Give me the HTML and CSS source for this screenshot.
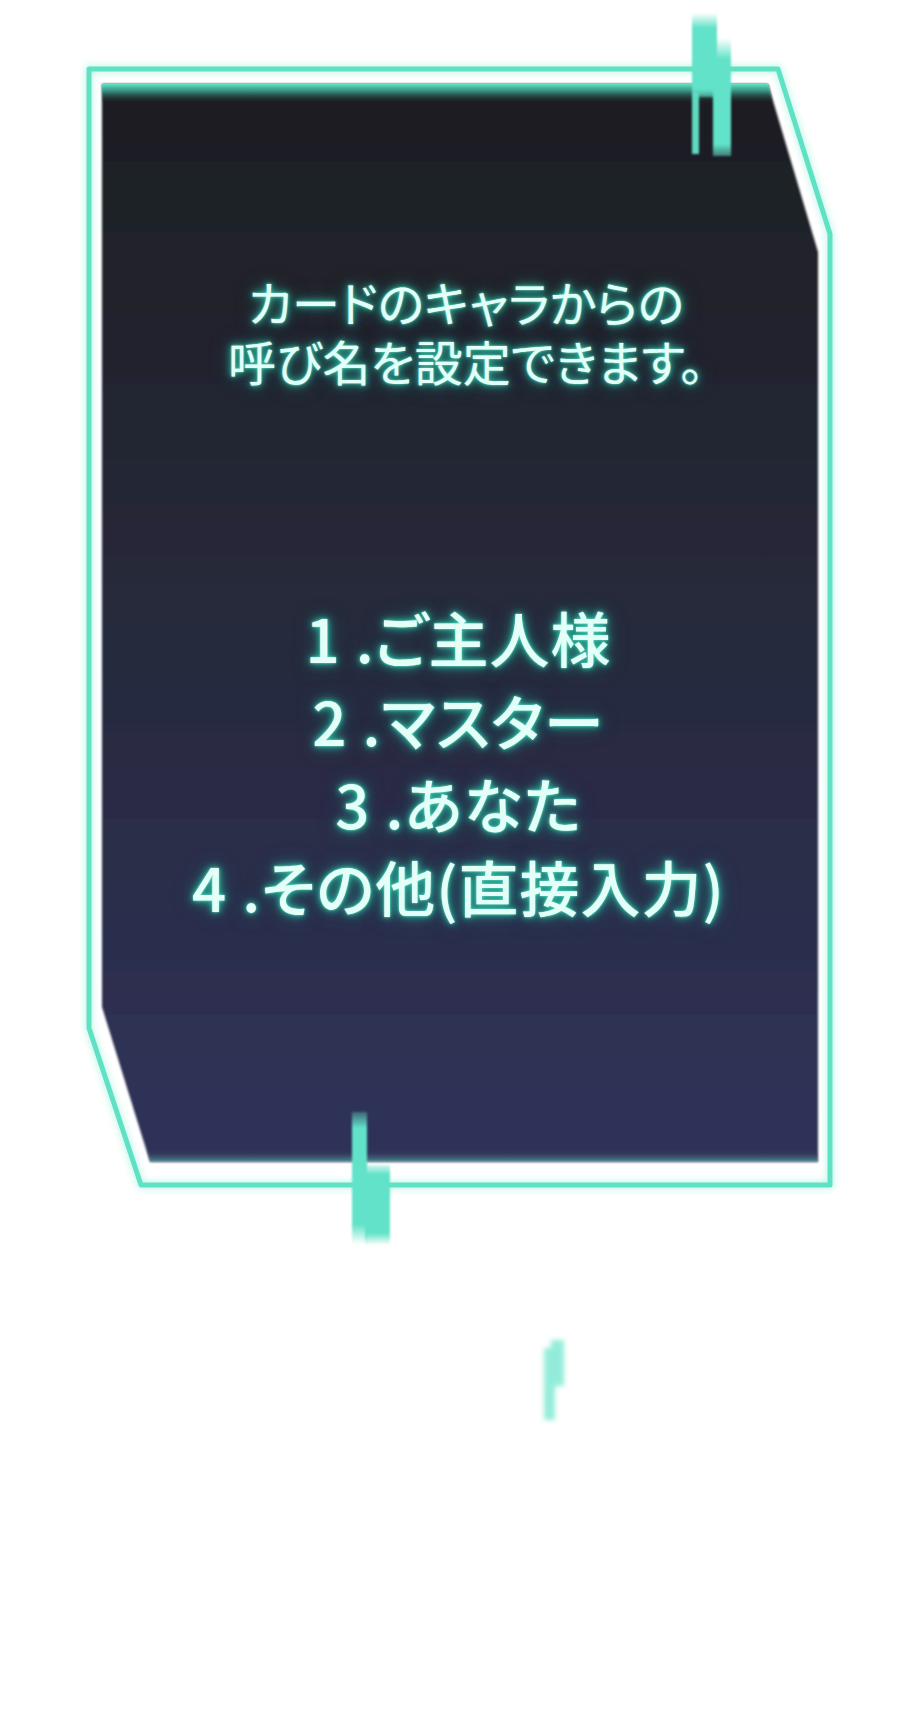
FILE: index.html
```html
<!DOCTYPE html>
<html lang="ja">
<head>
<meta charset="utf-8">
<title>呼び名設定</title>
<link rel="stylesheet" href="styles.css">
</head>
<body>
<div class="stage">
  <svg class="deco" width="917" height="1725" viewBox="0 0 917 1725" aria-hidden="true">
    <defs>
      <linearGradient id="panelFill" x1="0" y1="84" x2="0" y2="1162" gradientUnits="userSpaceOnUse">
        <stop offset="0" stop-color="#1d1e22"/>
        <stop offset="0.45" stop-color="#262939"/>
        <stop offset="1" stop-color="#30325a"/>
      </linearGradient>
      <linearGradient id="topGlow" x1="0" y1="84" x2="0" y2="104" gradientUnits="userSpaceOnUse">
        <stop offset="0" stop-color="#62e3c6" stop-opacity="1"/>
        <stop offset="0.35" stop-color="#3fae98" stop-opacity="0.8"/>
        <stop offset="1" stop-color="#1d1e22" stop-opacity="0"/>
      </linearGradient>
      <linearGradient id="botGlow" x1="0" y1="1150" x2="0" y2="1163" gradientUnits="userSpaceOnUse">
        <stop offset="0" stop-color="#30325a" stop-opacity="0"/>
        <stop offset="1" stop-color="#5fd8c0" stop-opacity="0.7"/>
      </linearGradient>
      <linearGradient id="fadeTop" x1="0" y1="0" x2="0" y2="1">
        <stop offset="0" stop-color="#62e2c8" stop-opacity="0"/>
        <stop offset="0.18" stop-color="#62e2c8" stop-opacity="1"/>
        <stop offset="0.9" stop-color="#62e2c8" stop-opacity="1"/>
        <stop offset="1" stop-color="#62e2c8" stop-opacity="0.5"/>
      </linearGradient>
      <linearGradient id="fadeBoth" x1="0" y1="0" x2="0" y2="1">
        <stop offset="0" stop-color="#62e2c8" stop-opacity="0.3"/>
        <stop offset="0.12" stop-color="#62e2c8" stop-opacity="1"/>
        <stop offset="0.85" stop-color="#62e2c8" stop-opacity="1"/>
        <stop offset="1" stop-color="#62e2c8" stop-opacity="0"/>
      </linearGradient>
      <clipPath id="panelClip">
        <path d="M102 84 H768 L818 252 V1162 H150 L102 1007 Z"/>
      </clipPath>
      <filter id="soft" x="-10%" y="-10%" width="120%" height="120%">
        <feGaussianBlur stdDeviation="3"/>
      </filter>
      <filter id="blur1" x="-50%" y="-20%" width="200%" height="140%">
        <feGaussianBlur stdDeviation="1.2"/>
      </filter>
      <filter id="blur3" x="-100%" y="-30%" width="300%" height="160%">
        <feGaussianBlur stdDeviation="2.5"/>
      </filter>
    </defs>

    <!-- outer frame glow + line -->
    <path d="M89 69 H778 L830 234 V1185 H141 L89 1028 Z" fill="none" stroke="#8ff0d8" stroke-width="9" stroke-linejoin="round" opacity="0.45" filter="url(#soft)"/>
    <path d="M89 69 H778 L830 234 V1185 H141 L89 1028 Z" fill="none" stroke="#5fe2c3" stroke-width="5" stroke-linejoin="round"/>

    <!-- inner panel -->
    <path d="M102 84 H768 L818 252 V1162 H150 L102 1007 Z" fill="url(#panelFill)" filter="url(#blur1)"/>
    <g clip-path="url(#panelClip)">
      <rect x="90" y="80" width="740" height="26" fill="url(#topGlow)"/>
      <rect x="90" y="1148" width="740" height="16" fill="url(#botGlow)"/>
    </g>

    <!-- glitch bars, top right -->
    <g filter="url(#blur1)">
      <rect x="692" y="13" width="25" height="84" fill="url(#fadeTop)"/>
      <rect x="713" y="38" width="18" height="118" fill="url(#fadeTop)"/>
      <rect x="692" y="92" width="7" height="62" fill="#5fd9c0"/>
    </g>

    <!-- glitch bars, bottom -->
    <g filter="url(#blur1)">
      <rect x="352" y="1112" width="15" height="132" fill="url(#fadeBoth)"/>
      <rect x="365" y="1165" width="25" height="80" fill="url(#fadeBoth)"/>
    </g>

    <!-- faint glitch -->
    <g filter="url(#blur3)" opacity="0.75">
      <rect x="544" y="1348" width="11" height="72" fill="#6fe6cd"/>
      <rect x="551" y="1340" width="13" height="46" fill="#6fe6cd"/>
    </g>
  </svg>

  <div class="card">
    <p class="intro">
      <span class="line">カードのキャラからの</span>
      <span class="line">呼び名を設定できます。</span>
    </p>
    <ol class="names">
      <li><span class="num">1</span>.ご主人様</li>
      <li><span class="num">2</span>.マスター</li>
      <li><span class="num">3</span>.あなた</li>
      <li><span class="num">4</span>.その他(直接入力)</li>
    </ol>
  </div>
</div>
</body>
</html>
```

FILE: styles.css
```css
html, body {
  margin: 0;
  padding: 0;
  background: #ffffff;
}

.stage {
  position: relative;
  width: 917px;
  height: 1725px;
  overflow: hidden;
}

.deco {
  position: absolute;
  left: 0;
  top: 0;
  display: block;
}

.card {
  position: relative;
  padding-top: 272px;
  font-family: "Noto Sans CJK JP", "Noto Sans", sans-serif;
  font-feature-settings: "palt" 1;
  color: #e4fff8;
  text-shadow:
    0 0 2px #7ff0d6,
    0 0 6px #2fc7ab,
    0 0 12px rgba(38, 170, 150, 0.85),
    0 0 20px rgba(30, 140, 125, 0.5);
}

.intro {
  margin: 0;
  padding-left: 15px;
  text-align: center;
  font-size: 48px;
  line-height: 59px;
  font-weight: 400;
}

.intro .line {
  display: block;
}

.names {
  list-style: none;
  margin: 205px 0 0;
  padding: 0;
  text-align: center;
  font-size: 60px;
  line-height: 83px;
  font-weight: 500;
  letter-spacing: 1px;
}

.names .num {
  margin-right: 0.25em;
}
```
